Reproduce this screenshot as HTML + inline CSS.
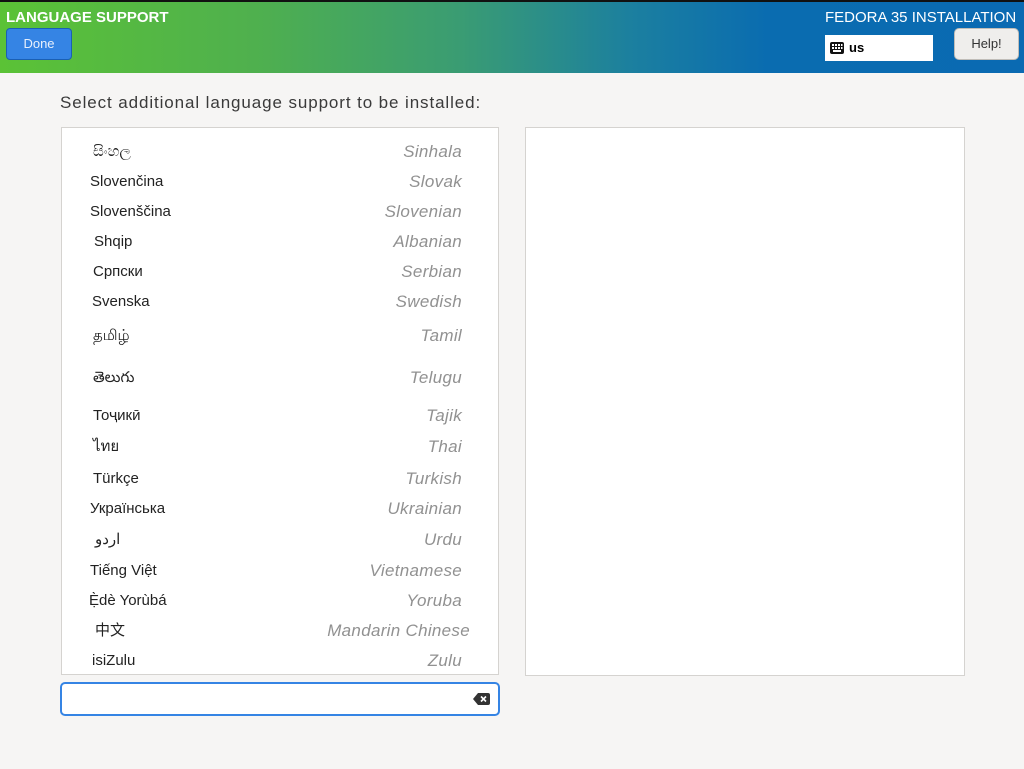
<!DOCTYPE html>
<html><head><meta charset="utf-8"><style>
body{margin:0;width:1024px;height:769px;background:#f6f5f4;font-family:"Liberation Sans","Noto Sans CJK SC",sans-serif;position:relative;overflow:hidden}
.hdr{position:absolute;left:0;top:0;width:1024px;height:73px;border-top:2px solid #111;box-sizing:border-box;background:linear-gradient(90deg,#5bc236 0%,#4fb04e 25%,#3a9c73 45%,#1b7fa0 62%,#0a6cb0 75%,#0a6ab2 100%)}
.t{position:absolute;color:#fff;font-size:15px}
.done{position:absolute;left:6px;top:28px;width:66px;height:32px;background:#3584e4;border:1px solid #1a5fb4;border-radius:4px;box-sizing:border-box;color:#e8f0fc;font-size:13px;text-align:center;line-height:30px}
.kb{position:absolute;left:825px;top:35px;width:108px;height:26px;background:#fff;font-size:13px;font-weight:bold;line-height:26px}
.help{position:absolute;left:954px;top:28px;width:65px;height:32px;background:#efeeec;border:1px solid #c0bdb8;border-radius:5px;box-sizing:border-box;color:#333;font-size:13px;text-align:center;line-height:30px}
.lbl{position:absolute;left:60px;top:93px;font-size:17px;color:#3a3a3a;letter-spacing:0.9px}
.list{position:absolute;left:61px;top:127px;width:438px;height:548px;background:#fff;border:1px solid #d5d3d0;box-sizing:border-box;overflow:hidden}
.r{position:absolute;left:0;width:436px;height:24px;font-size:15px;line-height:24px;color:#222;margin-top:1px}
.r .n{position:absolute;left:28px}
.r .e{position:absolute;right:36px;font-style:italic;color:#919191;font-size:17px;letter-spacing:0.3px}
.side{position:absolute;left:525px;top:127px;width:440px;height:549px;background:#fff;border:1px solid #d5d3d0;box-sizing:border-box}
.srch{position:absolute;left:60px;top:682px;width:440px;height:34px;background:#fff;border:2px solid #3584e4;border-radius:5px;box-sizing:border-box}
</style></head><body>
<div class="hdr"></div>
<div class="t" style="left:6px;top:9px;font-weight:bold">LANGUAGE SUPPORT</div>
<div class="t" style="left:825px;top:9px">FEDORA 35 INSTALLATION</div>
<div class="done">Done</div>
<div class="kb"><svg style="position:absolute;left:5px;top:7px" width="14" height="12"><rect x="0" y="0" width="14" height="12" rx="2" fill="#111"/><g fill="#fff"><rect x="2" y="2" width="2" height="2"/><rect x="5" y="2" width="2" height="2"/><rect x="8" y="2" width="2" height="2"/><rect x="11" y="2" width="1.5" height="2"/><rect x="2" y="5" width="2" height="2"/><rect x="5" y="5" width="2" height="2"/><rect x="8" y="5" width="2" height="2"/><rect x="11" y="5" width="1.5" height="2"/><rect x="3" y="8" width="8" height="2"/></g></svg><span style="position:absolute;left:24px">us</span></div>
<div class="help">Help!</div>
<div class="lbl">Select additional language support to be installed:</div>
<div class="list">
<div class="r" style="top:11px"><span class="n" style="left:31px">සිංහල</span><span class="e">Sinhala</span></div>
<div class="r" style="top:41px"><span class="n">Slovenčina</span><span class="e">Slovak</span></div>
<div class="r" style="top:71px"><span class="n">Slovenščina</span><span class="e">Slovenian</span></div>
<div class="r" style="top:101px"><span class="n" style="left:32px">Shqip</span><span class="e">Albanian</span></div>
<div class="r" style="top:131px"><span class="n" style="left:31px">Српски</span><span class="e">Serbian</span></div>
<div class="r" style="top:161px"><span class="n" style="left:30px">Svenska</span><span class="e">Swedish</span></div>
<div class="r" style="top:195px"><span class="n" style="left:31px">தமிழ்</span><span class="e">Tamil</span></div>
<div class="r" style="top:237px"><span class="n" style="left:31px">తెలుగు</span><span class="e">Telugu</span></div>
<div class="r" style="top:275px"><span class="n" style="left:31px">Тоҷикӣ</span><span class="e">Tajik</span></div>
<div class="r" style="top:306px"><span class="n" style="left:31px">ไทย</span><span class="e">Thai</span></div>
<div class="r" style="top:338px"><span class="n" style="left:31px">Türkçe</span><span class="e">Turkish</span></div>
<div class="r" style="top:368px"><span class="n">Українська</span><span class="e">Ukrainian</span></div>
<div class="r" style="top:399px"><span class="n" style="left:33px">اردو</span><span class="e">Urdu</span></div>
<div class="r" style="top:430px"><span class="n">Tiếng Việt</span><span class="e">Vietnamese</span></div>
<div class="r" style="top:460px"><span class="n" style="left:27px">Ẹ̀dè Yorùbá</span><span class="e">Yoruba</span></div>
<div class="r" style="top:490px"><span class="n" style="left:33px">中文</span><span class="e" style="right:28px">Mandarin Chinese</span></div>
<div class="r" style="top:520px"><span class="n" style="left:30px">isiZulu</span><span class="e">Zulu</span></div>
</div>
<div class="side"></div>
<div class="srch"><svg style="position:absolute;right:8px;top:9px" width="17" height="12"><path d="M5 0H15a2 2 0 0 1 2 2V10a2 2 0 0 1-2 2H5L0 6Z" fill="#333"/><path d="M8 3.5l5 5M13 3.5l-5 5" stroke="#fff" stroke-width="1.6"/></svg></div>
</body></html>
